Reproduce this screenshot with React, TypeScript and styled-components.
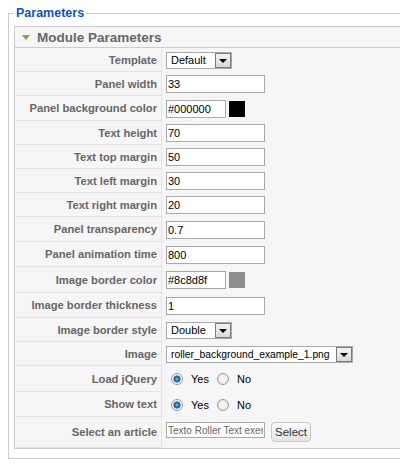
import React from 'react';
import styled, {createGlobalStyle} from 'styled-components';

const GlobalStyle = createGlobalStyle`
	html, body {
		margin: 0;
		padding: 0;
		background: #fff;
		overflow: hidden;
	}
	body {
		font-family: 'Liberation Sans', Arial, sans-serif;
	}
`;

const Fieldset = styled.fieldset`
	margin: 5px 0 0 8px;
	padding: 5px 5px 9px 5px;
	border: 1px solid #ccc;
	width: 440px;
	min-width: 0;
	box-sizing: border-box;
`;

const Legend = styled.legend`
	padding: 0 2px;
	font-size: 12.5px;
	line-height: 16px;
	font-weight: bold;
	color: #0b55c4;
`;

const Panel = styled.div`
	border: 1px solid #ccc;
	background: #f6f6f6;
`;

const PanelHeader = styled.h3`
	margin: 0;
	height: 20px;
	display: flex;
	align-items: center;
	padding-left: 7px;
	border-bottom: 1px solid #ccc;
	font-size: 13.5px;
	font-weight: bold;
	color: #666;
`;

const Toggler = styled.span`
	width: 0;
	height: 0;
	margin-right: 7px;
	border-left: 4px solid transparent;
	border-right: 4px solid transparent;
	border-top: 5px solid #76a844;
`;

const Row = styled.div<{$h: number}>`
	display: grid;
	grid-template-columns: 147px 1fr;
	height: ${(p) => p.$h}px;
`;

const Key = styled.div`
	display: flex;
	align-items: center;
	justify-content: flex-end;
	padding-right: 4px;
	border-right: 1px solid #e4e4e4;
	border-bottom: 1px solid #e4e4e4;
	box-sizing: border-box;
	font-size: 11.2px;
	font-weight: bold;
	color: #666;
	white-space: nowrap;
`;

const Value = styled.div<{$top?: boolean}>`
	display: flex;
	align-items: ${(p) => (p.$top ? 'flex-start' : 'center')};
	padding: ${(p) => (p.$top ? '5px 0 0 4px' : '0 0 0 4px')};
`;

const TextInput = styled.input<{$w: number; $muted?: boolean}>`
	width: ${(p) => p.$w}px;
	height: ${(p) => (p.$muted ? 16 : 18)}px;
	box-sizing: border-box;
	border: 1px solid #a9a9a9;
	padding: 0 1px;
	margin: 0;
	background: #fff;
	font-family: 'Liberation Sans', Arial, sans-serif;
	font-size: ${(p) => (p.$muted ? 10 : 11)}px;
	color: ${(p) => (p.$muted ? '#666' : '#000')};
	outline: none;
`;

const Swatch = styled.span<{$color: string}>`
	width: 16px;
	height: 16px;
	margin-left: 3px;
	background: ${(p) => p.$color};
`;

const SelectBox = styled.div<{$w: number; $size: number}>`
	width: ${(p) => p.$w}px;
	height: 17px;
	box-sizing: border-box;
	display: flex;
	align-items: center;
	border: 1px solid #a9a9a9;
	background: #fff;
	font-size: ${(p) => p.$size}px;
	color: #000;
`;

const SelectText = styled.span`
	flex: 1;
	padding-left: 4px;
	white-space: nowrap;
	overflow: hidden;
`;

const SelectArrow = styled.span`
	width: 16px;
	height: 15px;
	flex: none;
	box-sizing: border-box;
	display: flex;
	align-items: center;
	justify-content: center;
	border: 1px solid #7c7c7c;
	background: linear-gradient(#f4f4f4, #d9d9d9);

	&::after {
		content: '';
		margin-top: 2px;
		border-left: 4px solid transparent;
		border-right: 4px solid transparent;
		border-top: 4px solid #000;
	}
`;

const RadioLabel = styled.label`
	display: inline-flex;
	align-items: center;
	margin-left: 5px;
	margin-right: 3px;
	font-size: 11px;
	color: #000;
`;

const Radio = styled.input.attrs({type: 'radio'})`
	appearance: none;
	width: 12px;
	height: 12px;
	margin: 0 8px 0 0;
	border-radius: 50%;
	border: 1px solid #9a9a9a;
	background: radial-gradient(circle, #fdfdfd 0, #e9e9e9 5px);
	box-sizing: border-box;

	&:checked {
		background: radial-gradient(
			circle,
			#8fd0f7 0,
			#2a86c8 1.5px,
			#15558f 3.2px,
			#dcdcdc 3.8px,
			#fbfbfb 5px
		);
	}
`;

const Button = styled.button`
	width: 40px;
	height: 20px;
	margin-left: 6px;
	padding: 0;
	border: 1px solid #c6c6c6;
	border-radius: 4px;
	background: linear-gradient(#fbfbfb, #e4e4e4);
	font-family: 'Liberation Sans', Arial, sans-serif;
	font-size: 11.5px;
	color: #333;
`;

const Field = ({label, h, children, top}: {label: string; h: number; children: React.ReactNode; top?: boolean}) => (
	<Row $h={h}>
		<Key>{label}</Key>
		<Value $top={top}>{children}</Value>
	</Row>
);

const Select = ({w, value, size = 11}: {w: number; value: string; size?: number}) => (
	<SelectBox $w={w} $size={size}>
		<SelectText>{value}</SelectText>
		<SelectArrow />
	</SelectBox>
);

const YesNo = ({name}: {name: string}) => (
	<>
		<RadioLabel>
			<Radio name={name} defaultChecked />
			Yes
		</RadioLabel>
		<RadioLabel>
			<Radio name={name} />
			No
		</RadioLabel>
	</>
);

const texts: [string, string, number][] = [
	['Text height', '70', 24],
	['Text top margin', '50', 24],
	['Text left margin', '30', 24],
	['Text right margin', '20', 24],
	['Panel transparency', '0.7', 25],
	['Panel animation time', '800', 25],
];

export default function App() {
	return (
		<>
			<GlobalStyle />
			<Fieldset>
				<Legend>Parameters</Legend>
				<Panel>
					<PanelHeader>
						<Toggler />
						Module Parameters
					</PanelHeader>
					<Field label="Template" h={24}>
						<Select w={66} value="Default" />
					</Field>
					<Field label="Panel width" h={24}>
						<TextInput $w={99} defaultValue="33" />
					</Field>
					<Field label="Panel background color" h={25}>
						<TextInput $w={60} defaultValue="#000000" />
						<Swatch $color="#000000" />
					</Field>
					{texts.map(([label, value, h]) => (
						<Field key={label} label={label} h={h}>
							<TextInput $w={99} defaultValue={value} />
						</Field>
					))}
					<Field label="Image border color" h={26}>
						<TextInput $w={60} defaultValue="#8c8d8f" />
						<Swatch $color="#8c8d8f" />
					</Field>
					<Field label="Image border thickness" h={25}>
						<TextInput $w={99} defaultValue="1" />
					</Field>
					<Field label="Image border style" h={24}>
						<Select w={66} value="Double" />
					</Field>
					<Field label="Image" h={24}>
						<Select w={187} size={10.3} value="roller_background_example_1.png" />
					</Field>
					<Field label="Load jQuery" h={26}>
						<YesNo name="jquery" />
					</Field>
					<Field label="Show text" h={25}>
						<YesNo name="showtext" />
					</Field>
					<Field label="Select an article" h={31} top>
						<TextInput $w={99} $muted readOnly defaultValue="Texto Roller Text exemplo" />
						<Button>Select</Button>
					</Field>
				</Panel>
			</Fieldset>
		</>
	);
}
